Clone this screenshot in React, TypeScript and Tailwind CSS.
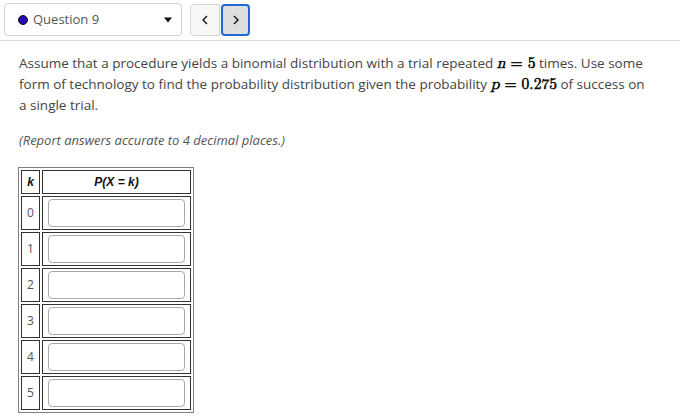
import React from 'react';

const ROWS = [0, 1, 2, 3, 4, 5];

const Math = ({ children }: { children: React.ReactNode }) => (
  <span className="font-['Latin_Modern_Math','DejaVu_Serif','Liberation_Serif',serif] text-[15.5px] font-bold text-[#111]">{children}</span>
);

const App: React.FC = () => {
  return (
    <div className="w-[680px] h-[420px] bg-white font-['Open_Sans',sans-serif] text-[#333] overflow-hidden">
      {/* Top bar */}
      <div className="flex items-center pl-1 pt-[3px] pb-1 border-b border-[#dcdcdc]">
        <div className="w-[178px] h-[33px] flex items-center justify-between border border-[#d0d0d0] rounded-[4px] pl-[13px] pr-[8px]">
          <div className="flex items-center gap-[5px]">
            <span className="w-[10px] h-[10px] rounded-full bg-[#2a0bb0] border border-[#111]"></span>
            <span className="text-[13px] text-[#555]">Question 9</span>
          </div>
          <svg width="10" height="8" viewBox="0 0 10 8"><path d="M1 1.5h8L5 6.5z" fill="#111" /></svg>
        </div>
        <div className="flex ml-[8px]">
          <button className="w-[30px] h-[32px] flex items-center justify-center bg-[#f7f7f7] border border-[#d6d6d6] rounded-l-[4px]">
            <svg width="8" height="12" viewBox="0 0 8 12"><path d="M6 2L2 6l4 4" stroke="#111" strokeWidth="1.4" fill="none" /></svg>
          </button>
          <button className="w-[29px] h-[32px] ml-[1px] flex items-center justify-center bg-[#dedede] border-2 border-[#1f68d6] rounded-[4px]">
            <svg width="8" height="12" viewBox="0 0 8 12"><path d="M2 2l4 4-4 4" stroke="#111" strokeWidth="1.4" fill="none" /></svg>
          </button>
        </div>
      </div>

      {/* Question */}
      <div className="pl-[19px] pr-[30px] pt-[12px]">
        <p className="text-[13.5px] leading-[20px] text-[#444]">
          Assume that a procedure yields a binomial distribution with a trial repeated <Math><i>n</i> = 5</Math> times. Use some form of technology to find the probability distribution given the probability <Math><i>p</i> = 0.275</Math> of success on a single trial.
        </p>
        <p className="mt-[15px] text-[13px] leading-[20px] italic text-[#555]">(Report answers accurate to 4 decimal places.)</p>

        <table className="mt-[17px] w-[176px] table-fixed border border-[#808080] border-separate border-spacing-[2px] -ml-[1px]">
          <thead>
            <tr>
              <th className="w-[19px] h-[24px] border border-[#333] p-0 text-[12px] italic font-bold font-['Liberation_Sans',sans-serif] text-[#111]">k</th>
              <th className="w-[149px] h-[24px] border border-[#333] p-0 text-[12px] italic font-bold font-['Liberation_Sans',sans-serif] text-[#111]">P(X = k)</th>
            </tr>
          </thead>
          <tbody>
            {ROWS.map((k) => (
              <tr key={k}>
                <td className="h-[34px] border border-[#333] text-center text-[12px] text-[#555] p-0">{k}</td>
                <td className="h-[34px] border border-[#333] pl-[5px] pr-[5px] py-[2px]">
                  <input className="block w-[137px] h-[28px] border border-[#a9a9a9] rounded-[4px] bg-white" />
                </td>
              </tr>
            ))}
          </tbody>
        </table>
      </div>
    </div>
  );
};

export default App;
